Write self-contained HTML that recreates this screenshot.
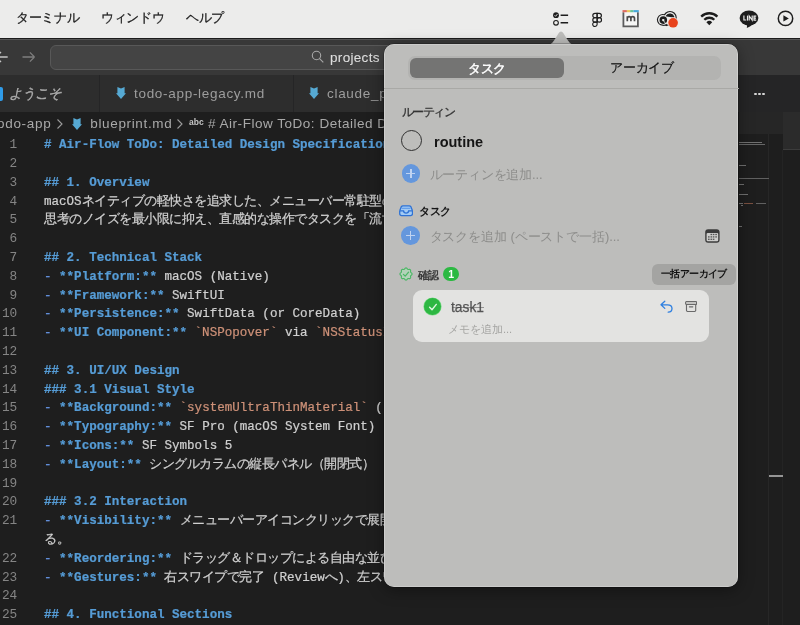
<!DOCTYPE html>
<html lang="ja">
<head>
<meta charset="utf-8">
<title>Air-Flow ToDo</title>
<style>
*{box-sizing:border-box;margin:0;padding:0}
html,body{width:800px;height:625px;overflow:hidden;background:#1e1e1e}
body{font-family:"Liberation Sans",sans-serif;position:relative;color:#ccc}
.abs{position:absolute}
/* ---------- macOS menu bar ---------- */
#menubar{position:absolute;left:0;top:0;width:800px;height:37.800px;background:#ececeb;color:#1c1c1c;font-size:13px}
#menubar span.m{position:absolute;top:9px;line-height:17px;white-space:nowrap;letter-spacing:-.3px;-webkit-text-stroke:.25px #1c1c1c}
/* ---------- vscode ---------- */
#win{position:absolute;left:0;top:37px;width:800px;height:588px;background:#1e1e1e}
#titlebar{position:absolute;left:0;top:0;width:800px;height:38px;background:#383838}
#search{position:absolute;left:50px;top:7.500px;width:640px;height:25.500px;border:1px solid #585858;border-radius:6px;background:#444}
#tabs{position:absolute;left:0;top:38px;width:800px;height:37px;background:#252526}
.tab{position:absolute;top:0;height:37px;background:#2d2d2d;border-right:1px solid #252526;font-size:13.5px;letter-spacing:.7px;color:#9d9d9d;line-height:37px;white-space:nowrap}
#crumbs{position:absolute;left:0;top:75px;width:800px;height:23px;font-size:13.5px;letter-spacing:.7px;color:#a9a9a9;line-height:23px;white-space:nowrap}
#code{position:absolute;left:0;top:99.200px;width:800px;font-family:"Liberation Mono",monospace;font-size:12.550px;line-height:18.800px;color:#d0d0d0}
#code .r{position:relative;height:18.8px}
#code .n{position:absolute;left:0;width:17px;text-align:right;color:#858585;top:0;font-size:12.800px;letter-spacing:-.2px}
#code .t{position:absolute;left:44px;top:0;white-space:pre;-webkit-text-stroke:.22px}
.h{color:#569cd6;font-weight:bold}
.b{color:#569cd6;font-weight:bold}
.l{color:#6796e6}
.s{color:#ce9178}
.j{letter-spacing:-.5px}
/* ---------- popover ---------- */
#pop{position:absolute;left:383.500px;top:43.800px;width:354.800px;height:543.200px;border-radius:10px;background:#bdbdbb;box-shadow:inset 0 0 0 .6px rgba(255,255,255,.45),0 0 0 .5px rgba(0,0,0,.4),0 3px 16px rgba(0,0,0,.38)}
#arrow{position:absolute;left:547px;top:31px;width:28px;height:14px}
#seg{position:absolute;left:24px;top:12.300px;width:312.500px;height:23.600px;border-radius:7px;background:#b3b3b1}
#seg .on{position:absolute;left:1.700px;top:1.600px;width:154.500px;height:20.600px;border-radius:6px;background:#747473;color:#fff;text-align:center;line-height:21px;font-size:13px;-webkit-text-stroke:.45px #fff;letter-spacing:-.3px}
#seg .off{position:absolute;left:156px;top:1.300px;width:156px;height:21px;color:#111;text-align:center;line-height:21px;font-size:13px;letter-spacing:-.3px;-webkit-text-stroke:.2px #111}
#sep{position:absolute;left:0;top:44px;width:355px;height:1px;background:#a9a9a6}
.pl{position:absolute;white-space:nowrap}
.mm{height:1px;background:#707070}
.ph{font-size:13px;color:#8d8d8b;line-height:17px}
.plus{width:18.600px;height:18.600px;border-radius:50%;background:#6497dd}
.plus:before{content:"";position:absolute;left:4.800px;top:8.650px;width:9px;height:1.300px;background:#bfd3f1}
.plus:after{content:"";position:absolute;left:8.650px;top:4.800px;width:1.300px;height:9px;background:#bfd3f1}
</style>
</head>
<body>
<div id="root" style="position:absolute;left:0;top:0;width:800px;height:625px;will-change:transform">

<!-- ================= VS Code window ================= -->
<div id="win">
  <div id="titlebar">
    <div class="abs" style="left:0;top:0;width:800px;height:2px;background:#1c1c1c"></div>
    <div class="abs" style="left:0;top:2px;width:800px;height:.9px;background:#565656"></div>
    <svg class="abs" style="left:-7.500px;top:12px" width="20" height="16" viewBox="0 0 20 16"><path d="M3 8h11.700M3 8l5-5M3 8l5 5" fill="none" stroke="#c4c4c4" stroke-width="1.400"/></svg>
    <svg class="abs" style="left:21px;top:12px" width="16" height="16" viewBox="0 0 16 16"><path d="M1.5 8h12M13.5 8l-4.6-4.6M13.5 8l-4.6 4.6" fill="none" stroke="#7d7d7d" stroke-width="1.3"/></svg>
    <div id="search">
      <svg class="abs" style="left:260px;top:4.500px" width="14" height="14" viewBox="0 0 14 14"><circle cx="5.500" cy="5.500" r="4.200" fill="none" stroke="#a8a8a8" stroke-width="1.100"/><path d="M8.600 8.600l3.700 3.700" stroke="#a8a8a8" stroke-width="1.100"/></svg>
      <span class="abs" style="left:279px;top:3.300px;font-size:13.500px;color:#dedede;line-height:17px;letter-spacing:.32px;-webkit-text-stroke:.1px #dedede">projects</span>
    </div>
  </div>

  <div id="tabs">
    <div class="tab" style="left:0;width:99.500px">
      <div class="abs" style="left:-4px;top:11.600px;width:6.500px;height:14.600px;background:#2f9be8;border-radius:2px"></div>
      <span class="abs" style="left:8.500px;font-style:italic;color:#adadad;letter-spacing:-.7px;-webkit-text-stroke:.35px #adadad">ようこそ</span>
    </div>
    <div class="tab" style="left:99.500px;width:194.500px">
      <svg class="abs" style="left:16.400px;top:12.400px" width="10" height="12" viewBox="0 0 10 12"><path d="M1.400 0L5 1.500 8.600 0V6.200H10L5 12 0 6.200H1.400z" fill="#56a9d3"/></svg>
      <span class="abs" style="left:34.500px">todo-app-legacy.md</span>
    </div>
    <div class="tab" style="left:294px;width:445px;border-right:0">
      <svg class="abs" style="left:15.200px;top:12.400px" width="10" height="12" viewBox="0 0 10 12"><path d="M1.400 0L5 1.500 8.600 0V6.200H10L5 12 0 6.200H1.400z" fill="#56a9d3"/></svg>
      <span class="abs" style="left:33px">claude_p</span>
    </div>
    <div class="abs" style="left:754.400px;top:17.500px;width:2.200px;height:2.200px;border-radius:50%;background:#d6d6d6;box-shadow:4px 0 0 #d6d6d6,8px 0 0 #d6d6d6"></div>
  </div>

  <div id="crumbs">
    <span class="abs" style="left:-3px">odo-app</span>
    <svg class="abs" style="left:55.500px;top:6px" width="8" height="12" viewBox="0 0 8 12"><path d="M1.5 1.500l4.500 4.500-4.500 4.500" fill="none" stroke="#9c9c9c" stroke-width="1.100"/></svg>
    <svg class="abs" style="left:72.300px;top:5.800px" width="10" height="12" viewBox="0 0 10 12"><path d="M1.400 0L5 1.500 8.600 0V6.200H10L5 12 0 6.200H1.400z" fill="#56a9d3"/></svg>
    <span class="abs" style="left:90.300px;letter-spacing:.65px">blueprint.md</span>
    <svg class="abs" style="left:175.500px;top:6px" width="8" height="12" viewBox="0 0 8 12"><path d="M1.5 1.500l4.500 4.500-4.500 4.500" fill="none" stroke="#9c9c9c" stroke-width="1.100"/></svg>
    <span class="abs" style="left:189px;font-size:8.500px;color:#c5c5c5;top:-1px;letter-spacing:.1px;font-weight:bold">abc</span>
    <span class="abs" style="left:208px;letter-spacing:.52px"># Air-Flow ToDo: Detailed Design</span>
  </div>

  <div id="code">
<div class="r"><span class="n">1</span><span class="t h"># Air-Flow ToDo: Detailed Design Specification</span></div>
<div class="r"><span class="n">2</span></div>
<div class="r"><span class="n">3</span><span class="t h">## 1. Overview</span></div>
<div class="r"><span class="n">4</span><span class="t">macOS<span class="j">ネイティブの軽快さを追求した、メニューバー常駐型のタスク管理</span></span></div>
<div class="r"><span class="n">5</span><span class="t"><span class="j">思考のノイズを最小限に抑え、直感的な操作でタスクを「流す」こと</span></span></div>
<div class="r"><span class="n">6</span></div>
<div class="r"><span class="n">7</span><span class="t h">## 2. Technical Stack</span></div>
<div class="r"><span class="n">8</span><span class="t"><span class="l">-</span> <span class="b">**Platform:**</span> macOS (Native)</span></div>
<div class="r"><span class="n">9</span><span class="t"><span class="l">-</span> <span class="b">**Framework:**</span> SwiftUI</span></div>
<div class="r"><span class="n">10</span><span class="t"><span class="l">-</span> <span class="b">**Persistence:**</span> SwiftData (or CoreData)</span></div>
<div class="r"><span class="n">11</span><span class="t"><span class="l">-</span> <span class="b">**UI Component:**</span> <span class="s">`NSPopover`</span> via <span class="s">`NSStatusItem`</span></span></div>
<div class="r"><span class="n">12</span></div>
<div class="r"><span class="n">13</span><span class="t h">## 3. UI/UX Design</span></div>
<div class="r"><span class="n">14</span><span class="t h">### 3.1 Visual Style</span></div>
<div class="r"><span class="n">15</span><span class="t"><span class="l">-</span> <span class="b">**Background:**</span> <span class="s">`systemUltraThinMaterial`</span> (</span></div>
<div class="r"><span class="n">16</span><span class="t"><span class="l">-</span> <span class="b">**Typography:**</span> SF Pro (macOS System Font)</span></div>
<div class="r"><span class="n">17</span><span class="t"><span class="l">-</span> <span class="b">**Icons:**</span> SF Symbols 5</span></div>
<div class="r"><span class="n">18</span><span class="t"><span class="l">-</span> <span class="b">**Layout:**</span> <span class="j">シングルカラムの縦長パネル（開閉式）</span></span></div>
<div class="r"><span class="n">19</span></div>
<div class="r"><span class="n">20</span><span class="t h">### 3.2 Interaction</span></div>
<div class="r"><span class="n">21</span><span class="t"><span class="l">-</span> <span class="b">**Visibility:**</span> <span class="j">メニューバーアイコンクリックで展開。</span></span></div>
<div class="r"><span class="n"></span><span class="t"><span class="j">る。</span></span></div>
<div class="r"><span class="n">22</span><span class="t"><span class="l">-</span> <span class="b">**Reordering:**</span> <span class="j">ドラッグ＆ドロップによる自由な並び替え</span></span></div>
<div class="r"><span class="n">23</span><span class="t"><span class="l">-</span> <span class="b">**Gestures:**</span> <span class="j">右スワイプで完了</span> (Review<span class="j">へ</span>)<span class="j">、左スワイプ</span></span></div>
<div class="r"><span class="n">24</span></div>
<div class="r"><span class="n">25</span><span class="t h">## 4. Functional Sections</span></div>
<div class="r"><span class="n">26</span></div>
  </div>

  <!-- minimap / right strip -->
  <div class="abs" style="left:739px;top:75px;width:61px;height:513px;background:#1e1e1e"></div>
  <div class="abs" style="left:739px;top:75px;width:44px;height:22px;background:#262626"></div>
  <div class="abs" style="left:783px;top:75px;width:17px;height:38px;background:#2b2b2b;border-bottom:1px solid #3c3c3c"></div>
  <div class="abs" style="left:768px;top:97px;width:1px;height:491px;background:#272727"></div>
  <div class="abs" style="left:782px;top:113px;width:1px;height:475px;background:#242424"></div>
  <div class="abs mm" style="left:739px;top:104.500px;width:23px"></div>
  <div class="abs mm" style="left:739px;top:106.500px;width:26px;background:#666"></div>
  <div class="abs mm" style="left:739px;top:127.500px;width:7px"></div>
  <div class="abs mm" style="left:739px;top:140.500px;width:30px;background:#606060"></div>
  <div class="abs mm" style="left:739px;top:146.500px;width:5px"></div>
  <div class="abs mm" style="left:739px;top:156.500px;width:9px"></div>
  <div class="abs mm" style="left:739px;top:165.500px;width:4px"></div>
  <div class="abs mm" style="left:744px;top:165.500px;width:9px;background:#7a5040"></div>
  <div class="abs mm" style="left:756px;top:165.500px;width:10px;background:#606060"></div>
  <div class="abs mm" style="left:741px;top:168px;width:2px"></div>
  <div class="abs mm" style="left:739px;top:188.500px;width:3px"></div>
  <div class="abs" style="left:768.600px;top:438.200px;width:14px;height:2px;background:#959595"></div>
</div>

<!-- ================= menu bar ================= -->
<div id="menubar">
  <span class="m" style="left:16px">ターミナル</span>
  <span class="m" style="left:101px">ウィンドウ</span>
  <span class="m" style="left:186px">ヘルプ</span>
  <svg class="abs" style="left:540px;top:0" width="260" height="38" viewBox="540 0 260 38">
    <!-- checklist -->
    <circle cx="556" cy="15.2" r="2.9" fill="#1d1d1d"/>
    <path d="M554.600 15.300l1 1 1.800-2.200" fill="none" stroke="#ececeb" stroke-width=".9"/>
    <circle cx="556" cy="22.800" r="2.350" fill="none" stroke="#1d1d1d" stroke-width="1.1"/>
    <path d="M560.600 15.200h7.500M560.600 22.800h7.500" stroke="#1d1d1d" stroke-width="1.500"/>
    <!-- figma -->
    <g fill="none" stroke="#1d1d1d" stroke-width="1.150">
      <path d="M597.100 13.300h-2.100a2.200 2.200 0 0 0 0 4.400h2.100z"/>
      <path d="M597.100 13.300h2.100a2.200 2.200 0 0 1 0 4.400h-2.100z"/>
      <path d="M597.100 17.700h-2.100a2.200 2.200 0 0 0 0 4.400h2.100z"/>
      <circle cx="599.300" cy="19.900" r="2.200"/>
      <path d="M597.100 22.100h-2.100a2.200 2.200 0 1 0 2.100 2.200z"/>
    </g>
    <!-- m -->
    <rect x="622.500" y="12" width="16.300" height="15" fill="#f6f6f5"/>
    <path d="M623.400 12.300v14h14.500v-14" fill="none" stroke="#5c5c5c" stroke-width="1.800"/>
    <rect x="622.500" y="10.100" width="4.400" height="2.100" fill="#de6c62"/>
    <rect x="626.900" y="10.100" width="3.300" height="2.100" fill="#ecc65a"/>
    <rect x="630.200" y="10.100" width="3.200" height="2.100" fill="#68c498"/>
    <rect x="633.400" y="10.100" width="5.400" height="2.100" fill="#48a8da"/>
    <path d="M627.300 21.300v-5M627.300 18.500c0-2.400 3.600-2.400 3.600 0v2.800M630.900 18.500c0-2.400 3.600-2.400 3.600 0v2.800" fill="none" stroke="#4a4a4a" stroke-width="1.700"/>
    <!-- creative cloud -->
    <circle cx="662.800" cy="19.800" r="5.900" fill="#1d1d1d"/>
    <circle cx="670" cy="17.600" r="6.700" fill="#1d1d1d"/>
    <rect x="662.800" y="20" width="10" height="5.700" fill="#1d1d1d"/>
    <circle cx="662.800" cy="19.800" r="4.800" fill="#ececeb"/>
    <circle cx="670" cy="17.600" r="5.600" fill="#ececeb"/>
    <rect x="662.800" y="20" width="10" height="4.600" fill="#ececeb"/>
    <circle cx="663.300" cy="20.100" r="2.500" fill="none" stroke="#1d1d1d" stroke-width="2.600"/>
    <path d="M666.600 15.800a4 4 0 0 1 7.100 1.200l-3.400-.6z" fill="#1d1d1d" stroke="#1d1d1d" stroke-width="1.400" stroke-linejoin="round"/>
    <path d="M662.600 19.300l4.200 6" stroke="#ececeb" stroke-width=".8"/>
    <path d="M665.600 24.400l1.400 1.300" stroke="#1d1d1d" stroke-width="1.600"/>
    <circle cx="673.100" cy="22.800" r="5.500" fill="#efe6e0"/>
    <circle cx="673.100" cy="22.800" r="4.800" fill="#e8421b"/>
    <!-- wifi -->
    <g fill="none" stroke="#1d1d1d" stroke-width="2.300" stroke-linecap="butt">
      <path d="M701.200 16.600a11.500 11.500 0 0 1 16.200 0"/>
      <path d="M704.300 19.800a7.100 7.100 0 0 1 10 0"/>
    </g>
    <path d="M709.300 25.200l-2.900-3a4.100 4.100 0 0 1 5.800 0z" fill="#1d1d1d"/>
    <!-- LINE -->
    <ellipse cx="749" cy="17.900" rx="9.400" ry="7.400" fill="#1d1d1d"/>
    <path d="M746.300 24.300c.6.800 1 2 .5 3.600c2.200-.6 4.300-2 5.700-3.600z" fill="#1d1d1d"/>
    <g fill="none" stroke="#ececeb" stroke-width="1.150">
      <path d="M743.900 15.600v4.400h2.300"/>
      <path d="M747.500 15.600v5"/>
      <path d="M749.200 20.600v-4.600l3 4.200v-4.600"/>
      <path d="M756.200 16.100h-2.200v4h2.200M754 18.100h2"/>
    </g>
    <!-- play -->
    <circle cx="785.500" cy="18.400" r="7.200" fill="none" stroke="#1d1d1d" stroke-width="1.500"/>
    <path d="M783.400 15.200v6.400l5.400-3.200z" fill="#1d1d1d"/>
  </svg>
</div>

<!-- ================= popover ================= -->
<svg id="arrow" viewBox="0 0 28 14"><path d="M1 14C7.500 13.500 10.500 .4 14 .4s6.500 13.100 13 13.600z" fill="#bdbdbb"/></svg>
<div id="pop"><div class="abs" style="left:.5px;top:0;width:355px;height:543px">
  <div id="seg"><div class="on">タスク</div><div class="off">アーカイブ</div></div>
  <div id="sep"></div>

  <span class="pl" style="left:17.500px;top:61px;font-size:11.500px;color:#333;line-height:14px;letter-spacing:-1.400px;-webkit-text-stroke:.3px #333">ルーティン</span>
  <div class="abs" style="left:17.300px;top:86.400px;width:21.200px;height:21.200px;border:1.900px solid #2f2f2f;border-radius:50%"></div>
  <span class="pl" style="left:50px;top:89px;font-size:14.500px;color:#151515;line-height:18px;font-weight:bold">routine</span>

  <div class="abs plus" style="left:17.700px;top:120.500px"></div>
  <span class="pl ph" style="left:45.700px;top:122.300px;letter-spacing:-.2px">ルーティンを追加...</span>

  <svg class="abs" style="left:15px;top:161.600px" width="14.200" height="11.400" viewBox="0 0 14.200 11.400"><path d="M4 .8h6.200c.8 0 1.400.4 1.800 1.100l1.300 3.300c.2.400.2.800.2 1.200v2.400c0 1-.8 1.800-1.800 1.800H2.500c-1 0-1.800-.8-1.800-1.800V6.400c0-.4 0-.8.200-1.200l1.300-3.300C2.600 1.200 3.200.8 4 .8z" fill="#a3cbf4" stroke="#2f72d4" stroke-width="1.300" stroke-linejoin="round"/><path d="M.9 5.900h3.600c.2 1.400 1.200 2.200 2.600 2.200s2.400-.8 2.600-2.200h3.600" fill="none" stroke="#2f72d4" stroke-width="1.400"/><path d="M2.700 3.300h8.800" stroke="#5b97e6" stroke-width="1.100"/></svg>
  <span class="pl" style="left:35px;top:160.500px;font-size:11px;color:#151515;line-height:14px;font-weight:bold;letter-spacing:-.3px">タスク</span>

  <div class="abs plus" style="left:17.400px;top:182.300px"></div>
  <span class="pl ph" style="left:45.500px;top:184.300px;letter-spacing:-.1px">タスクを追加 (ペーストで一括)...</span>
  <svg class="abs" style="left:321.100px;top:185.400px" width="14.800" height="13.900" viewBox="0 0 14.800 13.900"><rect x=".2" y=".2" width="14.400" height="13.500" rx="2.900" fill="#3b3b3b"/><rect x="1.600" y="4" width="11.600" height="8.300" rx="1.100" fill="#cdcdcb"/><g fill="#555"><rect x="5.50" y="4.85" width="1.600" height="1.300"/><rect x="7.80" y="4.85" width="1.600" height="1.300"/><rect x="10.30" y="4.85" width="1.600" height="1.300"/><rect x="3.00" y="7.25" width="1.600" height="1.300"/><rect x="5.50" y="7.25" width="1.600" height="1.300"/><rect x="7.80" y="7.25" width="1.600" height="1.300"/><rect x="10.30" y="7.25" width="1.600" height="1.300"/><rect x="3.00" y="9.65" width="1.600" height="1.300"/><rect x="5.50" y="9.65" width="1.600" height="1.300"/><rect x="7.80" y="9.65" width="1.600" height="1.300"/></g></svg>

  <svg class="abs" style="left:14.700px;top:223.500px" width="14" height="14" viewBox="0 0 14 14"><path d="M13.10 7.00L13.01 7.39L12.78 7.76L12.44 8.08L12.10 8.37L11.80 8.63L11.62 8.91L11.55 9.24L11.57 9.64L11.61 10.08L11.62 10.55L11.53 10.97L11.31 11.31L10.97 11.53L10.55 11.62L10.08 11.61L9.64 11.57L9.24 11.55L8.91 11.62L8.63 11.80L8.37 12.10L8.08 12.44L7.76 12.78L7.39 13.01L7.00 13.10L6.61 13.01L6.24 12.78L5.92 12.44L5.63 12.10L5.37 11.80L5.09 11.62L4.76 11.55L4.36 11.57L3.92 11.61L3.45 11.62L3.03 11.53L2.69 11.31L2.47 10.97L2.38 10.55L2.39 10.08L2.43 9.64L2.45 9.24L2.38 8.91L2.20 8.63L1.90 8.37L1.56 8.08L1.22 7.76L0.99 7.39L0.90 7.00L0.99 6.61L1.22 6.24L1.56 5.92L1.90 5.63L2.20 5.37L2.38 5.09L2.45 4.76L2.43 4.36L2.39 3.92L2.38 3.45L2.47 3.03L2.69 2.69L3.03 2.47L3.45 2.38L3.92 2.39L4.36 2.43L4.76 2.45L5.09 2.38L5.37 2.20L5.63 1.90L5.92 1.56L6.24 1.22L6.61 0.99L7.00 0.90L7.39 0.99L7.76 1.22L8.08 1.56L8.37 1.90L8.63 2.20L8.91 2.38L9.24 2.45L9.64 2.43L10.08 2.39L10.55 2.38L10.97 2.47L11.31 2.69L11.53 3.03L11.62 3.45L11.61 3.92L11.57 4.36L11.55 4.76L11.62 5.09L11.80 5.37L12.10 5.63L12.44 5.92L12.78 6.24L13.01 6.61z" fill="#b2d2b8" stroke="#4bb765" stroke-width="1.100" stroke-linejoin="round"/><path d="M4.400 7.300l1.800 1.800 3.400-4" fill="none" stroke="#4bb765" stroke-width="1.200" stroke-linecap="round" stroke-linejoin="round"/></svg>
  <span class="pl" style="left:34px;top:224px;font-size:11px;color:#3c3c3c;line-height:14px;font-weight:bold;letter-spacing:-1px">確認</span>
  <div class="abs" style="left:59.200px;top:223.700px;width:15.800px;height:14px;border-radius:7px;background:#2cb942;color:#fff;font-size:10.500px;font-weight:bold;text-align:center;line-height:14.500px">1</div>

  <div class="abs" style="left:268px;top:220.700px;width:84px;height:20.200px;border-radius:6px;background:#a4a4a2;color:#111;font-size:10px;font-weight:bold;text-align:center;line-height:20px;white-space:nowrap;letter-spacing:-.6px">一括アーカイブ</div>

  <div class="abs" style="left:29px;top:246.500px;width:296px;height:51.800px;border-radius:9px;background:#e3e3e1">
    <div class="abs" style="left:11.300px;top:8px;width:17px;height:17px;border-radius:50%;background:#2db742;box-shadow:0 0 0 .6px #7fdc8c"></div>
    <svg class="abs" style="left:11.800px;top:8.500px" width="16" height="16" viewBox="0 0 16 16"><path d="M4.600 8.200l2.400 2.500 4.300-5.300" fill="none" stroke="#dff7e2" stroke-width="1.400" stroke-linecap="round" stroke-linejoin="round"/></svg>
    <span class="pl" style="left:38px;top:8.800px;font-size:13.800px;color:#555;line-height:17px;-webkit-text-stroke:.25px #555">task1</span><div class="abs" style="left:38.500px;top:17.200px;width:32.500px;height:.9px;background:rgba(70,70,70,.5)"></div>
    <svg class="abs" style="left:247px;top:10px" width="13" height="13" viewBox="0 0 13 13"><path d="M4.800 1.200L1 4.800l3.800 3.600M1.200 4.800h6.300c2.600 0 4.500 1.500 4.500 3.800s-1.700 3.600-3.800 3.600" fill="none" stroke="#2d7fe0" stroke-width="1.300" stroke-linecap="round" stroke-linejoin="round"/></svg>
    <svg class="abs" style="left:271.500px;top:10.800px" width="12.200" height="11.300" viewBox="0 0 14 13"><rect x=".7" y=".7" width="12.6" height="3.200" rx=".8" fill="none" stroke="#6a6a6a" stroke-width="1.300"/><path d="M1.700 4v6.600a1.500 1.500 0 0 0 1.500 1.500h7.600a1.500 1.500 0 0 0 1.500-1.500V4M5 6.700h4" fill="none" stroke="#6a6a6a" stroke-width="1.300" stroke-linecap="round"/></svg>
    <span class="pl" style="left:35px;top:32.200px;font-size:11px;color:#a5a5a3;line-height:14px">メモを追加...</span>
  </div>
</div></div>

</div>
</body>
</html>
